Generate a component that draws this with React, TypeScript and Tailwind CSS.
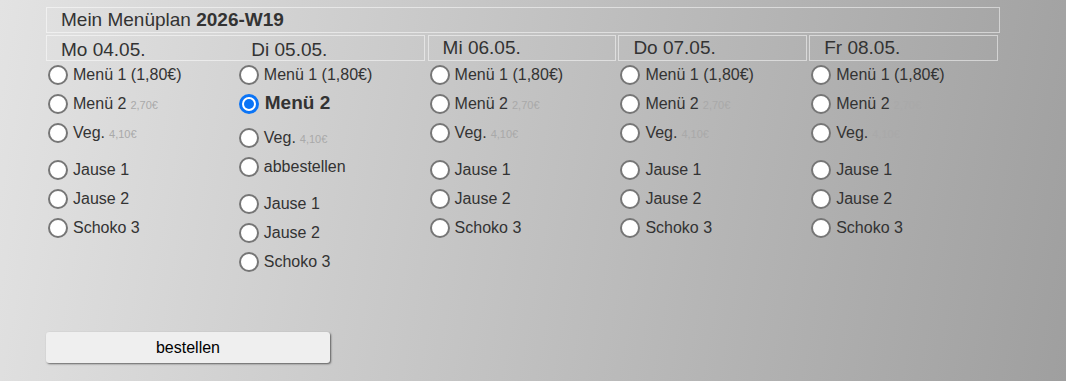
import React, { useState } from 'react';

type Item = { id: string; label: string; price?: string };

const days = ['Mo 04.05.', 'Di 05.05.', 'Mi 06.05.', 'Do 07.05.', 'Fr 08.05.'];

const menus: Item[] = [
  { id: 'm1', label: 'Menü 1 (1,80€)' },
  { id: 'm2', label: 'Menü 2', price: '2,70€' },
  { id: 'veg', label: 'Veg.', price: '4,10€' },
];

const snacks: Item[] = [
  { id: 'j1', label: 'Jause 1' },
  { id: 'j2', label: 'Jause 2' },
  { id: 's3', label: 'Schoko 3' },
];

const Radio: React.FC<{ checked: boolean }> = ({ checked }) =>
  checked ? (
    <span className="w-[20px] h-[20px] rounded-full border-[3px] border-[#0b74f6] bg-white flex items-center justify-center shrink-0">
      <span className="w-[10px] h-[10px] rounded-full bg-[#0b74f6]" />
    </span>
  ) : (
    <span className="w-[20px] h-[20px] rounded-full border-2 border-[#767676] bg-white shrink-0" />
  );

const Option: React.FC<{ item: Item; checked: boolean; onPick: () => void; extraTop?: boolean }> = ({
  item,
  checked,
  onPick,
  extraTop,
}) => (
  <label
    onClick={onPick}
    className={`h-[29px] flex items-center pl-[2px] cursor-pointer ${extraTop ? 'mt-[5px]' : ''}`}
  >
    <Radio checked={checked} />
    <span className={`ml-[5px] ${checked ? 'text-[19px] font-bold ml-[6px]' : 'text-[16px]'}`}>
      {item.label}
      {item.price && !checked && <span className="text-[11px] text-[#a9a9a9] ml-[4px]">{item.price}</span>}
    </span>
  </label>
);

const DayColumn: React.FC<{ index: number }> = ({ index }) => {
  const [menu, setMenu] = useState<string | null>(index === 1 ? 'm2' : null);
  const [snack, setSnack] = useState<string | null>(null);
  const selIndex = menus.findIndex((m) => m.id === menu);

  return (
    <div className="flex flex-col">
      {menus.map((m, i) => (
        <Option
          key={m.id}
          item={m}
          checked={menu === m.id}
          onPick={() => setMenu(m.id)}
          extraTop={selIndex >= 0 && i === selIndex + 1}
        />
      ))}
      {menu && (
        <Option item={{ id: 'x', label: 'abbestellen' }} checked={false} onPick={() => setMenu(null)} />
      )}
      <div className="h-2" />
      {snacks.map((s) => (
        <Option key={s.id} item={s} checked={snack === s.id} onPick={() => setSnack(s.id)} />
      ))}
    </div>
  );
};

export default function App() {
  return (
    <div
      className="h-[381px] w-full bg-[linear-gradient(100deg,#e3e3e3,#9f9f9f)] text-[#333333] pt-[7px]"
      style={{ fontFamily: '"Liberation Sans", Arial, sans-serif' }}
    >
      <div className="w-[954px] ml-[46px]">
        {/* Title */}
        <div className="h-[26px] border border-white/50 flex items-center pl-[14px] text-[19px]">
          <span>
            Mein Menüplan <b>2026-W19</b>
          </span>
        </div>

        {/* Day headers */}
        <div className="grid grid-cols-5 mt-[2px]">
          <div className="col-span-2 mr-[3px] h-[26px] border border-white/50 grid grid-cols-2 text-[19px]">
            <div className="pl-[14px] flex items-center">{days[0]}</div>
            <div className="pl-[16px] flex items-center">{days[1]}</div>
          </div>
          {days.slice(2).map((d) => (
            <div key={d} className="mr-[2px] h-[26px] border border-white/50 pl-[14px] flex items-center text-[19px]">
              {d}
            </div>
          ))}
        </div>

        {/* Options */}
        <div className="grid grid-cols-5 -mt-[1px]">
          {days.map((d, i) => (
            <DayColumn key={d} index={i} />
          ))}
        </div>
      </div>

      <div className="ml-[46px] mt-[56px] w-[284px]">
        <button className="w-full h-[31px] bg-[#efefef] rounded-[3px] text-[16px] text-black shadow-[1px_1px_2px_rgba(0,0,0,0.55)]">
          bestellen
        </button>
      </div>
    </div>
  );
}
